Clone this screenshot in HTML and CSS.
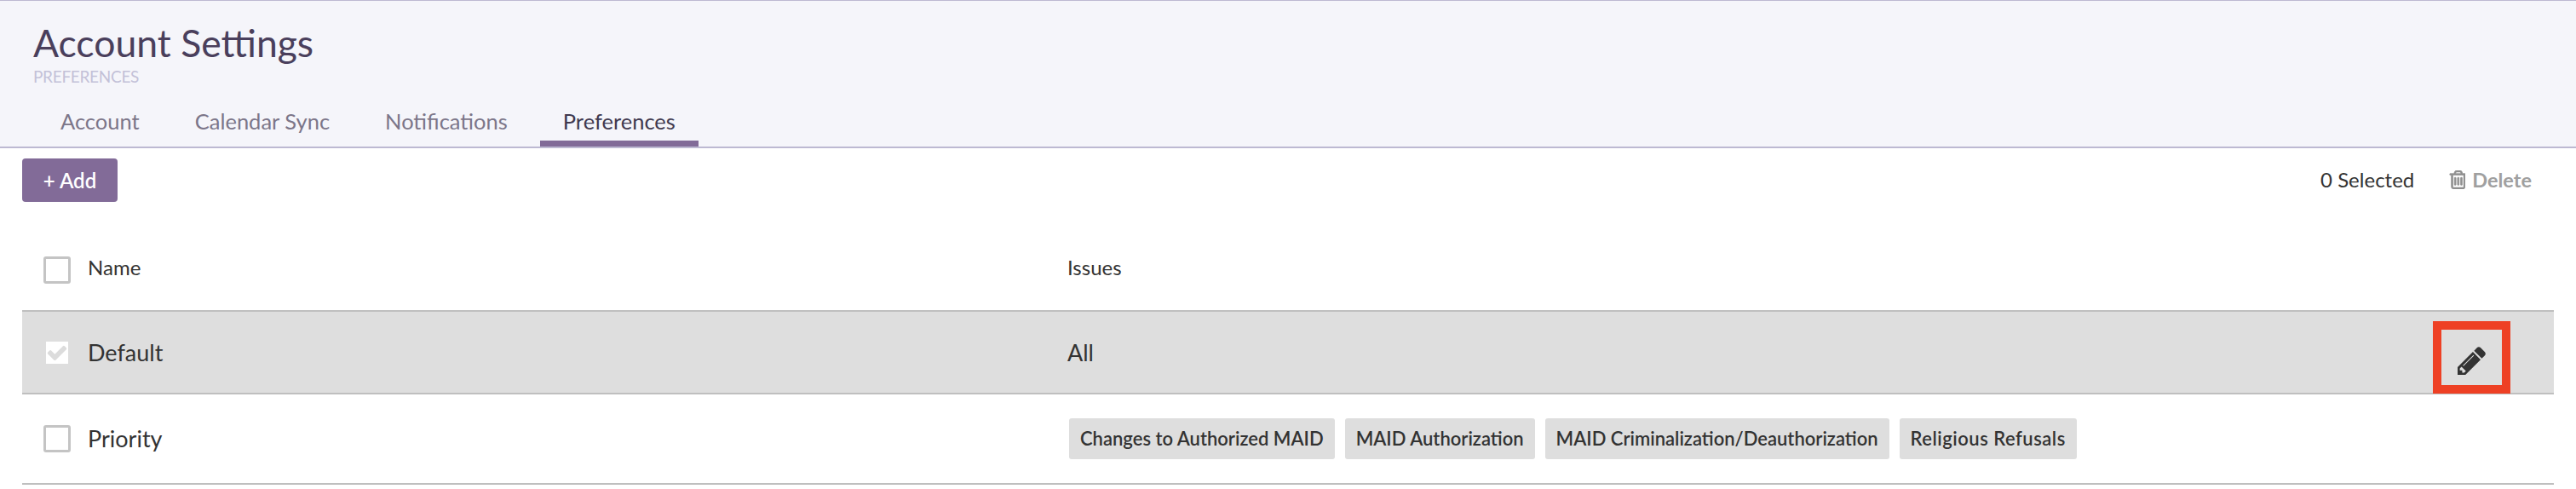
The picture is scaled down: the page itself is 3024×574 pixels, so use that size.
FILE: index.html
```html
<!DOCTYPE html>
<html lang="en">
<head>
  <meta charset="UTF-8" />
  <title>Account Settings</title>
  <link rel="stylesheet" href="styles.css">
</head>
<body>

  <div class="page-header">
    <h1>Account Settings</h1>
    <div class="subtitle">PREFERENCES</div>
    <div class="tabs">
      <a class="tab">Account</a>
      <a class="tab">Calendar Sync</a>
      <a class="tab">Notifications</a>
      <a class="tab active">Preferences</a>
    </div>
  </div>

  <div class="content">
    <div class="toolbar">
      <button class="add-btn">+ Add</button>
      <div class="selection">
        <span class="selected-count">0 Selected</span>
        <span class="delete">
          <svg class="trash-icon" viewBox="0 0 1408 1536"><path transform="translate(-64 -128)" d="M704 736v576q0 14-9 23t-23 9h-64q-14 0-23-9t-9-23v-576q0-14 9-23t23-9h64q14 0 23 9t9 23zm256 0v576q0 14-9 23t-23 9h-64q-14 0-23-9t-9-23v-576q0-14 9-23t23-9h64q14 0 23 9t9 23zm256 0v576q0 14-9 23t-23 9h-64q-14 0-23-9t-9-23v-576q0-14 9-23t23-9h64q14 0 23 9t9 23zm128 724v-948h-896v948q0 22 7 40.5t14.5 27 10.5 8.5h832q3 0 10.5-8.5t14.5-27 7-40.5zm-672-1076h448l-48-117q-7-9-17-11h-317q-10 2-17 11zm928 32v64q0 14-9 23t-23 9h-96v948q0 83-47 143.5t-113 60.5h-832q-66 0-113-58.5t-47-141.5v-952h-96q-14 0-23-9t-9-23v-64q0-14 9-23t23-9h309l70-167q15-37 54-63t79-26h320q40 0 79 26t54 63l70 167h309q14 0 23 9t9 23z"/></svg>
          Delete
        </span>
      </div>
    </div>

    <div class="row head-row">
      <div class="name-cell"><span class="checkbox"></span><span class="label">Name</span></div>
      <div class="issues-cell"><span class="label">Issues</span></div>
    </div>

    <div class="row default-row">
      <div class="name-cell">
        <span class="check-disabled">
          <svg viewBox="0 0 1792 1792"><path d="M1671 566q0 40-28 68l-724 724-136 136q-28 28-68 28t-68-28l-136-136-362-362q-28-28-28-68t28-68l136-136q28-28 68-28t68 28l294 295 656-657q28-28 68-28t68 28l136 136q28 28 28 68z"/></svg>
        </span>
        <span>Default</span>
      </div>
      <div class="issues-cell">All</div>
      <div class="edit-box">
        <svg class="pencil-icon" viewBox="0 0 1515 1515"><path transform="translate(-136 -136)" d="M491 1536l91-91-235-235-91 91v107h128v128h107zm523-928q0-22-22-22-10 0-17 7l-542 542q-7 7-7 17 0 22 22 22 10 0 17-7l542-542q7-7 7-17zm-54-192l416 416-832 832h-416v-416zm683 96q0 53-37 90l-166 166-416-416 166-165q36-38 90-38 53 0 91 38l235 234q37 39 37 91z"/></svg>
      </div>
    </div>

    <div class="row priority-row">
      <div class="name-cell"><span class="checkbox"></span><span class="label-lg">Priority</span></div>
      <div class="issues-cell tags">
        <span class="tag">Changes to Authorized MAID</span>
        <span class="tag">MAID Authorization</span>
        <span class="tag">MAID Criminalization/Deauthorization</span>
        <span class="tag">Religious Refusals</span>
      </div>
    </div>
  </div>

</body>
</html>
```

FILE: styles.css
```css
:root {
  --purple: #826b98;
  --line: #bfbfbf;
  --row-grey: #dedede;
  --text: #333;
}

body {
  font-family: Lato, "Open Sans", sans-serif;
  color: var(--text);
  background-color: white;
  margin: 0;
}

.page-header {
  background-color: #f5f5fa;
  border-top: 1px solid #bdb9d2;
  border-bottom: 2px solid #bdb9d2;
  height: 171px;
  padding-left: 39px;
}

h1 {
  font-size: 44.5px;
  font-weight: 400;
  line-height: 52px;
  color: #4a3f5c;
  margin: 23px 0 0 0;
}

.subtitle {
  font-size: 19px;
  line-height: 24px;
  letter-spacing: -0.3px;
  color: #c3c1d8;
  margin-top: 2px;
}

.tabs {
  display: flex;
  gap: 11px;
  margin-left: 5px;
  margin-top: 24px;
}

.tab {
  font-size: 25.5px;
  line-height: 32px;
  padding: 0 27px 7px 27px;
  color: #7c7689;
  border-bottom: 7px solid transparent;
}

.tab.active {
  color: #40394f;
  border-bottom-color: var(--purple);
}

.content {
  padding: 0 26px;
}

.toolbar {
  display: flex;
  justify-content: space-between;
  align-items: center;
  padding-top: 12px;
}

.add-btn {
  font-family: inherit;
  font-size: 24px;
  font-weight: 600;
  color: white;
  background-color: var(--purple);
  border: none;
  border-radius: 4px;
  width: 112px;
  height: 51px;
  padding: 0;
}

.selection {
  display: flex;
  align-items: center;
  gap: 40px;
  font-size: 24px;
  margin-right: 26px;
  margin-top: -2px;
}

.delete {
  display: flex;
  align-items: center;
  gap: 8px;
  font-size: 23.5px;
  font-weight: 700;
  color: #a0a0a0;
}

.trash-icon {
  width: 20px;
  height: 22px;
  fill: #8f8f8f;
  stroke: #8f8f8f;
  stroke-width: 50;
}

.row {
  display: flex;
  align-items: center;
  position: relative;
  border-bottom: 2px solid var(--line);
  font-size: 27px;
}

.head-row {
  height: 95px;
  padding-top: 32px;
  font-size: 24px;
}

.head-row .label {
  display: block;
  margin-top: -7px;
}

.default-row {
  height: 95px;
  background-color: var(--row-grey);
}

.priority-row {
  height: 104px;
}

.label-lg {
  margin-top: -2px;
}

.name-cell {
  display: flex;
  align-items: center;
  gap: 20px;
  width: 1227px;
  padding-left: 25px;
  box-sizing: border-box;
}

.checkbox {
  display: block;
  width: 32px;
  height: 32px;
  box-sizing: border-box;
  border: 3px solid #c4c4c4;
  border-radius: 3px;
  background-color: white;
}

.check-disabled {
  display: flex;
  align-items: center;
  justify-content: center;
  width: 26px;
  height: 26px;
  margin: 0 3px;
  background-color: white;
}

.check-disabled svg {
  width: 26px;
  height: 26px;
  fill: #dcdcdc;
}

.tags {
  display: flex;
  gap: 12px;
  margin-left: 2px;
}

.tag {
  font-size: 22px;
  font-weight: 600;
  line-height: 48px;
  padding: 0 13px;
  background-color: var(--row-grey);
  border-radius: 3px;
}

.tag:last-child {
  letter-spacing: 0.5px;
}

/* red box drawn over the screenshot */
.edit-box {
  position: absolute;
  right: 51px;
  top: 11px;
  width: 71px;
  height: 65px;
  border: 10px solid #ee4024;
  display: flex;
  align-items: center;
  justify-content: center;
}

.pencil-icon {
  width: 33px;
  height: 33px;
  margin-top: 8px;
  fill: #333;
}
```
